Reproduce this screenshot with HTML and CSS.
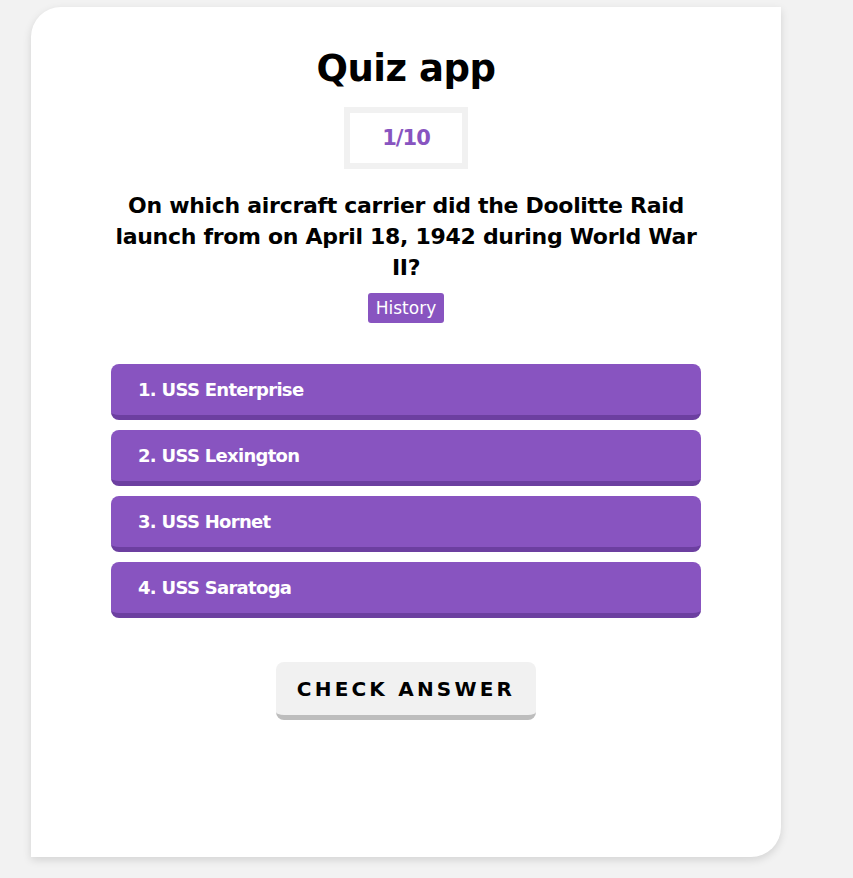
FILE: index.html
```html
<!DOCTYPE html>
<html lang="en">
<head>
<meta charset="utf-8">
<title>Quiz app</title>
<link rel="stylesheet" href="styles.css">
</head>
<body>
<main class="card">
  <h1 class="title">Quiz app</h1>
  <div class="counter">1/10</div>
  <h2 class="question">On which aircraft carrier did the Doolitte Raid launch from on April 18, 1942 during World War II?</h2>
  <span class="tag">History</span>
  <ul class="answers">
    <li class="answer">1. USS Enterprise</li>
    <li class="answer">2. USS Lexington</li>
    <li class="answer">3. USS Hornet</li>
    <li class="answer">4. USS Saratoga</li>
  </ul>
  <button class="check" type="button">CHECK ANSWER</button>
</main>
</body>
</html>
```
FILE: styles.css
```css
* { box-sizing: border-box; }
html, body { margin: 0; padding: 0; }
body {
  background: #f2f2f2;
  font-family: "DejaVu Sans", "Open Sans", sans-serif;
  color: #000;
  min-height: 878px;
  padding: 7px 0 0 31px;
}
.card {
  width: 750px;
  height: 850px;
  background: #fff;
  border-radius: 30px 0 30px 0;
  box-shadow: 0 3px 8px rgba(0,0,0,0.13);
  padding: 40px 80px 0;
  display: flex;
  flex-direction: column;
  align-items: center;
}
.title {
  margin: 0;
  font-size: 37px;
  line-height: 44px;
  font-weight: 700;
  letter-spacing: -0.5px;
}
.counter {
  margin-top: 16px;
  width: 124px;
  height: 62px;
  border: 6px solid #f1f1f1;
  display: flex;
  align-items: center;
  justify-content: center;
  color: #8854c0;
  font-weight: 700;
  font-size: 21px;
  letter-spacing: -1px;
}
.question {
  margin: 21px 0 0;
  width: 590px;
  text-align: center;
  font-size: 22px;
  line-height: 31px;
  font-weight: 700;
  letter-spacing: -0.3px;
}
.tag {
  margin-top: 10px;
  height: 30px;
  padding: 0 8px;
  background: #8854c0;
  color: #fff;
  border-radius: 3px;
  font-size: 17px;
  font-weight: 400;
  display: flex;
  align-items: center;
}
.answers {
  list-style: none;
  margin: 41px 0 0;
  padding: 0;
  width: 590px;
  display: flex;
  flex-direction: column;
  gap: 10px;
}
.answer {
  height: 56px;
  background: #8854c0;
  border-bottom: 5px solid #6c3fa0;
  border-radius: 8px;
  color: #fff;
  font-weight: 700;
  font-size: 18px;
  letter-spacing: -0.7px;
  padding-left: 27px;
  display: flex;
  align-items: center;
}
.check {
  margin-top: 44px;
  width: 260px;
  height: 58px;
  background: #f1f1f1;
  border: none;
  border-bottom: 5px solid #bdbdbd;
  border-radius: 8px;
  font-family: inherit;
  font-size: 20px;
  font-weight: 700;
  letter-spacing: 3.2px;
  color: #000;
  padding: 0;
}
```
